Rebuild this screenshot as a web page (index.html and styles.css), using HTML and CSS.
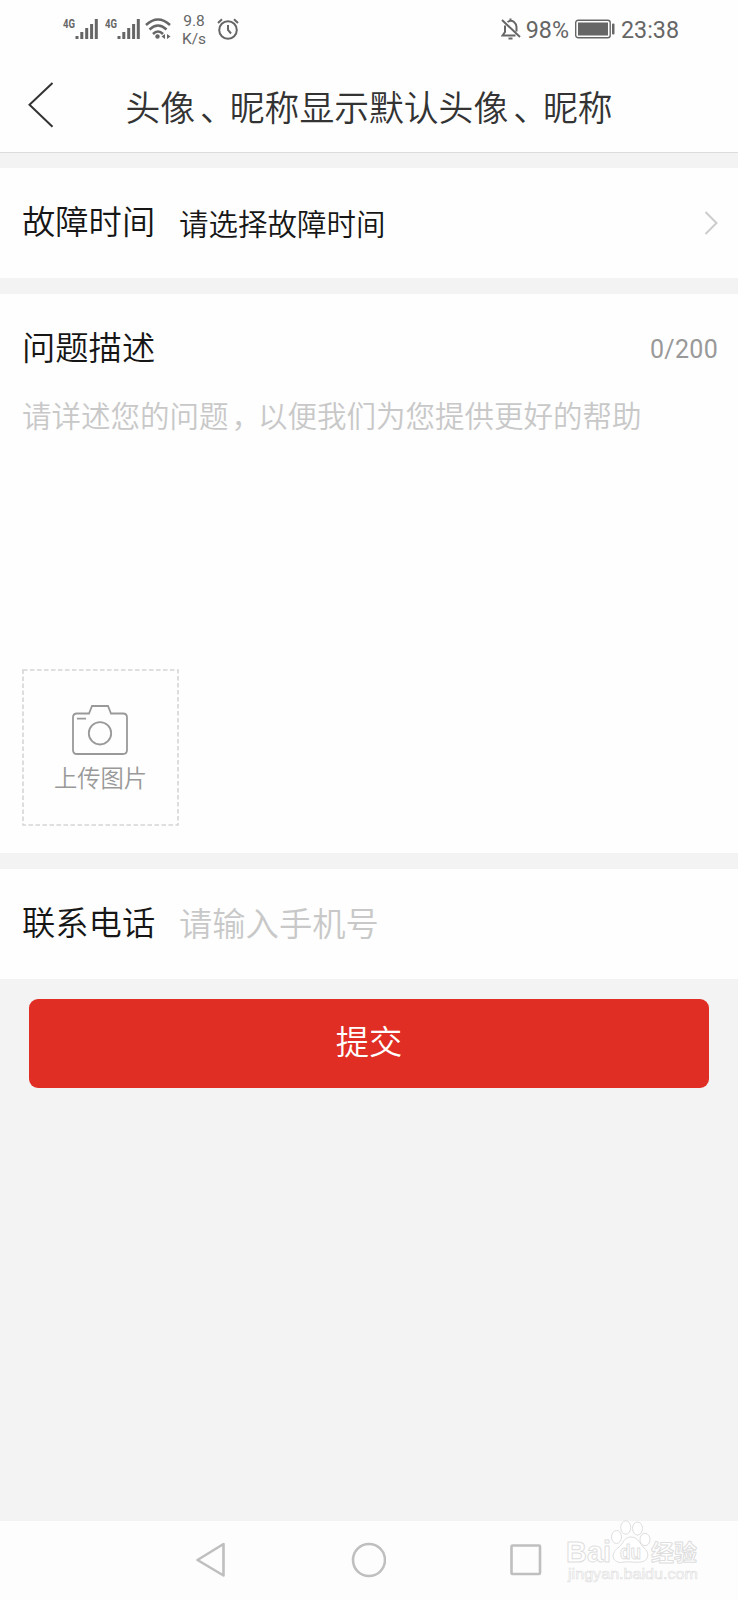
FILE: index.html
```html
<!DOCTYPE html>
<html lang="zh-CN">
<head>
    <meta charset="UTF-8">
    <meta name="viewport" content="width=device-width, initial-scale=1.0">
    <title>头像、昵称显示默认头像、昵称</title>
    <link rel="stylesheet" href="styles.css">
</head>
<body>
    <div class="status-bar">
        <div class="status-left">
            <svg class="signal" width="35" height="24" viewBox="0 0 35 24">
                <text class="net" x="0" y="11" textLength="12" lengthAdjust="spacingAndGlyphs">4G</text>
                <path d="M14 19v3M18.8 15v7M23.7 11v11M28.6 7v15M33.3 2v20" />
            </svg>
            <svg class="signal" width="35" height="24" viewBox="0 0 35 24">
                <text class="net" x="0" y="11" textLength="12" lengthAdjust="spacingAndGlyphs">4G</text>
                <path d="M14 19v3M18.8 15v7M23.7 11v11M28.6 7v15M33.3 2v20" />
            </svg>
            <svg class="wifi" width="26" height="24" viewBox="0 0 26 24">
                <path d="M1 8Q13 -3 25 8M4.5 12.5Q13 4.5 21.5 12.5M8 17Q13 12 18 17" />
                <circle cx="12.5" cy="19.5" r="2.2" />
                <path class="solid" d="M20 17v5l-3.500-2.500zM22 17v5l3.500-2.500z" />
            </svg>
            <div class="speed"><span>9.8</span><span>K/s</span></div>
            <svg class="alarm" width="22" height="22" viewBox="0 0 22 22">
                <circle cx="11" cy="12" r="8.800" />
                <path d="M11 7v5l3 3.500M1 5l4-3.700M21 5l-4-3.700" />
            </svg>
        </div>
        <div class="status-right">
            <svg class="bell" width="20" height="22" viewBox="0 0 20 22">
                <path d="M1 2l18 17M4 7.500V14l-2.500 3.500h13M6.500 4Q10 1.700 13 4Q15.500 6 15.500 9v4.500M9.500 0.500v2M7.500 20.500h4" />
            </svg>
            <span class="percent">98%</span>
            <svg class="battery" width="40" height="20" viewBox="0 0 40 20">
                <rect class="shell" x="0.700" y="1.200" width="34.500" height="17.500" rx="2.500" />
                <rect x="3" y="3.500" width="30" height="13" />
                <rect x="37" y="4.500" width="2.500" height="11" rx="1" />
            </svg>
            <span class="clock">23:38</span>
        </div>
    </div>

    <header class="header">
        <svg class="back" width="26" height="46" viewBox="0 0 26 46">
            <path d="M24.500 1L1.500 22.800L24.500 44.700" />
        </svg>
        <h1>头像<span class="mark">、</span>昵称显示默认头像<span class="mark">、</span>昵称</h1>
    </header>

    <main class="form">
        <div class="row">
            <span class="label">故障时间</span>
            <span class="value">请选择故障时间</span>
            <svg class="arrow" width="14" height="24" viewBox="0 0 14 24">
                <path d="M1.500 1L12.500 12L1.500 23" />
            </svg>
        </div>

        <div class="describe">
            <div class="describe-head">
                <span class="label">问题描述</span>
                <span class="count">0/200</span>
            </div>
            <div class="describe-text">请详述您的问题<span class="mark comma">，</span>以便我们为您提供更好的帮助</div>
            <div class="upload">
                <svg class="dashes" width="157" height="157">
                    <rect x="1" y="1" width="155" height="155" />
                </svg>
                <svg class="camera" width="56" height="50" viewBox="0 0 56 50">
                    <path d="M5 8.500H17L20 1H36L39 8.500H51Q55 8.500 55 12.500V45Q55 49 51 49H5Q1 49 1 45V12.500Q1 8.500 5 8.500ZM5 13.700H14" />
                    <circle cx="28" cy="28.300" r="11.200" />
                </svg>
                <span>上传图片</span>
            </div>
        </div>

        <div class="row">
            <span class="label">联系电话</span>
            <span class="placeholder">请输入手机号</span>
        </div>

        <button class="submit" type="button">提交</button>
    </main>

    <footer class="nav-bar">
        <svg width="30" height="36" viewBox="0 0 30 36"><path d="M27.500 2V33.500L1.500 18Z" /></svg>
        <svg width="36" height="36" viewBox="0 0 36 36"><circle cx="19" cy="18" r="16" /></svg>
        <svg width="32" height="32" viewBox="0 0 32 32"><rect x="1.500" y="1.500" width="28.500" height="28.500" rx="1" /></svg>
        <svg class="watermark" width="136" height="66" viewBox="0 0 136 66">
            <text class="brand" x="0" y="42" textLength="45" lengthAdjust="spacingAndGlyphs">Bai</text>
            <ellipse cx="50.500" cy="17" rx="5" ry="6.500" />
            <ellipse cx="59.700" cy="7.500" rx="5" ry="6.700" />
            <ellipse cx="71.500" cy="8.500" rx="5" ry="6.500" />
            <ellipse cx="79" cy="19.500" rx="5" ry="6.200" />
            <path d="M52 42C44 39 47 31 53 27C57 24 58 17 65 17C72 17 74 24 78 28C84 32 83 41 75 42C70 43 62 41 58 42Q54 43 52 42Z" />
            <text class="du" x="54" y="39" textLength="21" lengthAdjust="spacingAndGlyphs">du</text>
            <text class="cn" x="85" y="41" textLength="46" lengthAdjust="spacingAndGlyphs">经验</text>
            <text class="site" x="2" y="59" textLength="130" lengthAdjust="spacingAndGlyphs">jingyan.baidu.com</text>
        </svg>
    </footer>
</body>
</html>
```

FILE: styles.css
```css
* {
    box-sizing: border-box;
}
body {
    display: flex;
    flex-direction: column;
    width: 738px;
    height: 1600px;
    margin: 0;
    overflow: hidden;
    font-family: Roboto, "Noto Sans CJK SC", sans-serif;
    background-color: #f3f3f3;
}
svg {
    flex: none;
    display: block;
    fill: none;
}

/* status bar */
.status-bar {
    display: flex;
    justify-content: space-between;
    height: 60px;
    padding: 0 59px 0 63px;
    background-color: #fefefe;
    color: #666;
}
.status-left, .status-right {
    display: flex;
    align-items: center;
    height: 58px;
}
.signal {
    margin-right: 7px;
    stroke: #666;
    stroke-width: 3;
}
.net {
    font-size: 12px;
    font-weight: 700;
    fill: #666;
    stroke: none;
}
.wifi {
    margin-left: -2px;
    stroke: #666;
    stroke-width: 2.5;
}
.wifi circle, .wifi .solid {
    fill: #666;
    stroke: none;
}
.speed {
    display: flex;
    flex-direction: column;
    align-items: center;
    width: 26px;
    margin: 2px 10px 0 10px;
    font-size: 15.5px;
    line-height: 18px;
}
.alarm {
    stroke: #666;
    stroke-width: 2;
}
.bell {
    stroke: #666;
    stroke-width: 2;
}
.percent {
    margin: 1px 6px 0 5px;
    font-size: 23.3px;
}
.battery {
    margin-right: 6px;
    fill: #666;
}
.battery .shell {
    fill: none;
    stroke: #666;
    stroke-width: 1.4;
}
.clock {
    margin-top: 1px;
    font-size: 23.3px;
}

/* title */
.header {
    position: relative;
    display: flex;
    align-items: center;
    justify-content: center;
    height: 93px;
    border-bottom: 1px solid #dcdcdc;
    background-color: #fefefe;
}
.header h1 {
    margin: 5px 0 0;
    font-size: 34.8px;
    font-weight: 350;
    line-height: 50px;
    color: #333;
}
/* half-width punctuation, padded back out to a full em */
.mark {
    padding: 0 calc(0.5em - 5px) 0 5px;
    font-feature-settings: "halt";
}
.comma {
    padding: 0 calc(0.5em - 3px) 0 3px;
}
.back {
    position: absolute;
    left: 28px;
    top: 22px;
    stroke: #333;
    stroke-width: 2;
}

/* form */
.form {
    display: flex;
    flex-direction: column;
    flex: 1;
    gap: 16px;
    padding-top: 15px;
}
.row {
    display: flex;
    align-items: center;
    height: 110px;
    padding: 0 20px 0 22px;
    background-color: #fefefe;
}
.label {
    width: 157px;
    font-size: 33.3px;
    font-weight: 350;
    line-height: 48px;
    color: #161616;
}
.value {
    flex: 1;
    font-size: 29.5px;
    font-weight: 350;
    line-height: 42px;
    padding-top: 3px;
    color: #161616;
}
.placeholder {
    padding-top: 1px;
    font-size: 33.3px;
    font-weight: 350;
    line-height: 48px;
    color: #c8c8c8;
}
.arrow {
    stroke: #ccc;
    stroke-width: 2;
}
.describe {
    height: 559px;
    padding: 31px 20px 0 22px;
    background-color: #fefefe;
}
.describe-head {
    display: flex;
    align-items: center;
    justify-content: space-between;
}
.count {
    font-size: 25px;
    letter-spacing: 0.3px;
    color: #999;
}
.describe-text {
    height: 273px;
    margin-top: 23px;
    font-size: 29.5px;
    font-weight: 350;
    line-height: 42px;
    color: #c8c8c8;
}
.upload {
    position: relative;
    display: flex;
    flex-direction: column;
    align-items: center;
    width: 157px;
    height: 157px;
    padding-top: 36px;
    font-size: 23.3px;
    font-weight: 350;
    line-height: 34px;
    color: #999;
}
.upload span {
    margin-top: 7px;
}
.dashes {
    position: absolute;
    left: 0;
    top: 0;
    stroke: #d5d5d5;
    stroke-width: 1.6;
    stroke-dasharray: 4.5 2.5;
}
.camera {
    margin-right: 1px;
    stroke: #999;
    stroke-width: 1.8;
}
.submit {
    height: 89px;
    margin: 4px 29px 0;
    padding: 0 0 2px;
    border: 0;
    border-radius: 9px;
    background-color: #e02e24;
    font-family: inherit;
    font-size: 33.3px;
    font-weight: 350;
    line-height: 48px;
    color: #fff;
}

/* bottom navigation */
.nav-bar {
    position: relative;
    display: flex;
    align-items: center;
    gap: 124px;
    height: 79px;
    padding: 0 0 2px 196px;
    background-color: #fdfdfd;
    stroke: #bfbfbf;
    stroke-width: 2.6;
    stroke-linejoin: round;
}
.watermark {
    position: absolute;
    right: 36px;
    top: -1px;
    overflow: visible;
    fill: #fff;
    stroke: #dedede;
    stroke-width: 1;
}
.watermark text {
    font-family: "Liberation Sans", "Noto Sans CJK SC", sans-serif;
    font-weight: 700;
}
.brand {
    font-size: 30px;
}
.du {
    font-size: 20px;
}
.cn {
    font-size: 23px;
}
.watermark .site {
    font-size: 15px;
    font-weight: 400;
    stroke-width: 0.6;
}
```
